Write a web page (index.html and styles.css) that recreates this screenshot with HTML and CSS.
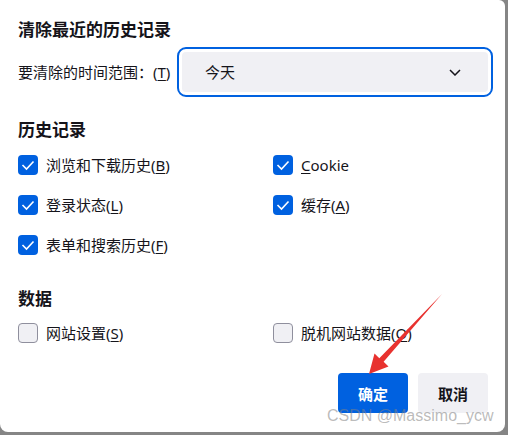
FILE: index.html
```html
<!DOCTYPE html>
<html lang="zh-CN">
<head>
    <meta charset="UTF-8">
    <meta name="viewport" content="width=device-width, initial-scale=1.0">
    <title>清除最近的历史记录</title>
    <link rel="stylesheet" href="styles.css">
</head>
<body>
    <div class="dialog">
        <h1 class="title">清除最近的历史记录</h1>
        <div class="range-row">
            <span class="range-label">要清除的时间范围：(<u>T</u>)</span>
            <div class="select">
                <span>今天</span>
                <svg class="chevron" width="12" height="7" viewBox="0 0 12 7">
                    <polyline points="1,1 6,6 11,1" fill="none" stroke="#15141a" stroke-width="1.5"/>
                </svg>
            </div>
        </div>

        <h2 class="section">历史记录</h2>
        <div class="options history">
            <label class="option"><span class="box checked"><svg width="20" height="20" viewBox="0 0 20 20"><polyline points="4.5,10 8.5,14 15.5,6.5" fill="none" stroke="#fff" stroke-width="1.6"/></svg></span><span>浏览和下载历史(<u>B</u>)</span></label>
            <label class="option"><span class="box checked"><svg width="20" height="20" viewBox="0 0 20 20"><polyline points="4.5,10 8.5,14 15.5,6.5" fill="none" stroke="#fff" stroke-width="1.6"/></svg></span><span><u>C</u>ookie</span></label>
            <label class="option"><span class="box checked"><svg width="20" height="20" viewBox="0 0 20 20"><polyline points="4.5,10 8.5,14 15.5,6.5" fill="none" stroke="#fff" stroke-width="1.6"/></svg></span><span>登录状态(<u>L</u>)</span></label>
            <label class="option"><span class="box checked"><svg width="20" height="20" viewBox="0 0 20 20"><polyline points="4.5,10 8.5,14 15.5,6.5" fill="none" stroke="#fff" stroke-width="1.6"/></svg></span><span>缓存(<u>A</u>)</span></label>
            <label class="option"><span class="box checked"><svg width="20" height="20" viewBox="0 0 20 20"><polyline points="4.5,10 8.5,14 15.5,6.5" fill="none" stroke="#fff" stroke-width="1.6"/></svg></span><span>表单和搜索历史(<u>F</u>)</span></label>
        </div>

        <h2 class="section data">数据</h2>
        <div class="options data-opts">
            <label class="option"><span class="box"></span><span>网站设置(<u>S</u>)</span></label>
            <label class="option"><span class="box"></span><span>脱机网站数据(<u>O</u>)</span></label>
        </div>

        <div class="buttons">
            <button class="btn primary">确定</button>
            <button class="btn">取消</button>
        </div>

        <svg class="arrow" width="508" height="435" viewBox="0 0 508 435">
            <polygon points="442,294 383.6,361.8 388.5,366.5 369,374 374.5,353.5 379.3,358.2" fill="#e8322f"/>
        </svg>
        <div class="watermark">CSDN @Massimo_ycw</div>
    </div>
</body>
</html>
```

FILE: styles.css
```css
body {
    margin: 0;
    padding: 0;
    background-color: #858585;
    font-family: "Noto Sans", "Noto Sans CJK SC", sans-serif;
    color: #15141a;
}
.dialog {
    position: relative;
    width: 505px;
    height: 432px;
    box-sizing: border-box;
    padding: 18px 17px 0 18px;
    background-color: #fff;
    border-radius: 0 6px 8px 8px;
}
.title {
    margin: 0;
    font-size: 17px;
    line-height: 24px;
    font-weight: bold;
}
.range-row {
    display: flex;
    align-items: center;
    height: 40px;
    margin-top: 10px;
    font-size: 15px;
    line-height: 20px;
}
.range-label u {
    text-underline-offset: 2px;
}
.select {
    margin-left: auto;
    width: 306px;
    height: 40px;
    box-sizing: border-box;
    display: flex;
    align-items: center;
    justify-content: space-between;
    padding: 0 27px 0 23px;
    background-color: #f0f0f4;
    border-radius: 4px;
    outline: 2px solid #0061e0;
    outline-offset: 3px;
    font-size: 15px;
}
.section {
    margin: 26px 0 0;
    font-size: 17px;
    line-height: 24px;
    font-weight: bold;
}
.section.data {
    margin-top: 22px;
}
.options {
    display: grid;
    grid-template-columns: 255px 1fr;
    grid-auto-rows: 40px;
    margin-top: 3px;
}
.options.data-opts {
    margin-top: 2px;
}
.option {
    display: flex;
    align-items: center;
    gap: 8px;
    font-size: 15px;
    line-height: 20px;
}
.option:nth-child(5) {
    grid-column: 1;
}
.option u {
    text-underline-offset: 2px;
}
.box {
    width: 20px;
    height: 20px;
    flex-shrink: 0;
    box-sizing: border-box;
    border: 1px solid #8f8f9d;
    border-radius: 4px;
    background-color: #f0f0f4;
    display: flex;
}
.box.checked {
    border: none;
    background-color: #0061e0;
}
.buttons {
    display: flex;
    justify-content: flex-end;
    gap: 10px;
    margin-top: 20px;
}
.btn {
    width: 70px;
    height: 40px;
    border: none;
    border-radius: 4px;
    background-color: #f0f0f4;
    color: #15141a;
    font-family: "Noto Sans CJK SC", sans-serif;
    font-size: 15px;
    font-weight: bold;
    padding: 0;
}
.btn.primary {
    background-color: #0061e0;
    color: #fff;
}
.arrow {
    position: absolute;
    top: 0;
    left: 0;
    pointer-events: none;
}
.watermark {
    position: absolute;
    left: 327px;
    top: 406px;
    font-family: "Liberation Sans", Arial, sans-serif;
    font-size: 16px;
    line-height: 20px;
    color: rgba(130, 130, 130, 0.55);
    pointer-events: none;
}
```
